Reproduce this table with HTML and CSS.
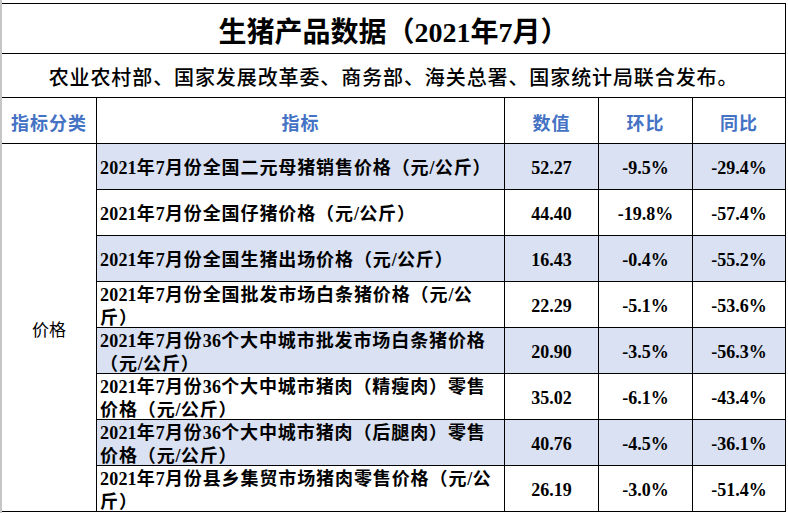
FILE: index.html
```html
<!DOCTYPE html>
<html lang="zh-CN">
<head>
<meta charset="utf-8">
<title>生猪产品数据（2021年7月）</title>
<link rel="stylesheet" href="styles.css">
</head>
<body>
<div class="sheet">
  <div class="grid">
    <div class="title">生猪产品数据（2021年7月）</div>
    <div class="subtitle">农业农村部、国家发展改革委、商务部、海关总署、国家统计局联合发布。</div>

    <div class="th">指标分类</div>
    <div class="th">指标</div>
    <div class="th">数值</div>
    <div class="th">环比</div>
    <div class="th">同比</div>

    <div class="cat">价格</div>

    <div class="ind alt"><span class="n">2021</span>年<span class="n">7</span>月份全国二元母猪销售价格（元<span class="n">/</span>公斤）</div>
    <div class="val alt">52.27</div>
    <div class="val alt">-9.5%</div>
    <div class="val alt">-29.4%</div>

    <div class="ind"><span class="n">2021</span>年<span class="n">7</span>月份全国仔猪价格（元<span class="n">/</span>公斤）</div>
    <div class="val">44.40</div>
    <div class="val">-19.8%</div>
    <div class="val">-57.4%</div>

    <div class="ind alt"><span class="n">2021</span>年<span class="n">7</span>月份全国生猪出场价格（元<span class="n">/</span>公斤）</div>
    <div class="val alt">16.43</div>
    <div class="val alt">-0.4%</div>
    <div class="val alt">-55.2%</div>

    <div class="ind"><div><span class="n">2021</span>年<span class="n">7</span>月份全国批发市场白条猪价格（元<span class="n">/</span>公<br>斤）</div></div>
    <div class="val">22.29</div>
    <div class="val">-5.1%</div>
    <div class="val">-53.6%</div>

    <div class="ind alt"><div><span class="n">2021</span>年<span class="n">7</span>月份<span class="n">36</span>个大中城市批发市场白条猪价格<br>（元<span class="n">/</span>公斤）</div></div>
    <div class="val alt">20.90</div>
    <div class="val alt">-3.5%</div>
    <div class="val alt">-56.3%</div>

    <div class="ind"><div><span class="n">2021</span>年<span class="n">7</span>月份<span class="n">36</span>个大中城市猪肉（精瘦肉）零售<br>价格（元<span class="n">/</span>公斤）</div></div>
    <div class="val">35.02</div>
    <div class="val">-6.1%</div>
    <div class="val">-43.4%</div>

    <div class="ind alt"><div><span class="n">2021</span>年<span class="n">7</span>月份<span class="n">36</span>个大中城市猪肉（后腿肉）零售<br>价格（元<span class="n">/</span>公斤）</div></div>
    <div class="val alt">40.76</div>
    <div class="val alt">-4.5%</div>
    <div class="val alt">-36.1%</div>

    <div class="ind"><div><span class="n">2021</span>年<span class="n">7</span>月份县乡集贸市场猪肉零售价格（元<span class="n">/</span>公<br>斤）</div></div>
    <div class="val">26.19</div>
    <div class="val">-3.0%</div>
    <div class="val">-51.4%</div>
  </div>
</div>
</body>
</html>
```

FILE: styles.css
```css
html, body {
  margin: 0;
  padding: 0;
  background: #ffffff;
}

.sheet {
  width: 788px;
  height: 513px;
  box-sizing: border-box;
  border-left: 2px solid #c6c6c6;
  padding-top: 3px;
  overflow: hidden;
}

.grid {
  display: grid;
  width: 784px;
  grid-template-columns: 95px 408px 94px 94px 93px;
  grid-template-rows: 50px 44px 46px repeat(8, 46px);
  border-top: 1px solid #000;
}

.grid > div {
  box-sizing: border-box;
  border-right: 1px solid #000;
  border-bottom: 1px solid #000;
  display: flex;
  align-items: center;
  color: #000;
}

.title {
  grid-column: 1 / -1;
  justify-content: center;
  padding-top: 3px;
  font-family: "Liberation Serif", "Noto Sans CJK SC", serif;
  font-weight: 700;
  font-size: 28px;
}

.subtitle {
  grid-column: 1 / -1;
  justify-content: center;
  padding-top: 2px;
  font-family: "Noto Sans CJK SC", sans-serif;
  font-weight: 500;
  font-size: 20px;
  letter-spacing: 0.9px;
}

.th {
  justify-content: center;
  padding-top: 3px;
  font-family: "Noto Sans CJK SC", sans-serif;
  font-weight: 700;
  font-size: 18px;
  letter-spacing: 1px;
  color: #4472c4 !important;
}

.cat {
  grid-row: span 8;
  justify-content: center;
  font-family: "Noto Sans CJK SC", sans-serif;
  font-size: 17px;
  padding-top: 2px;
}

.ind {
  padding: 4px 0 0 3px;
  font-family: "Liberation Serif", "Noto Sans CJK SC", serif;
  font-weight: 700;
  font-size: 18px;
  line-height: 23px;
  letter-spacing: 0.9px;
  white-space: nowrap;
}

.ind .n {
  letter-spacing: 0.2px;
}

.val {
  justify-content: center;
  padding-top: 3px;
  font-family: "Liberation Serif", serif;
  font-weight: 700;
  font-size: 18px;
}

.alt {
  background: #d9e1f2;
}
```
